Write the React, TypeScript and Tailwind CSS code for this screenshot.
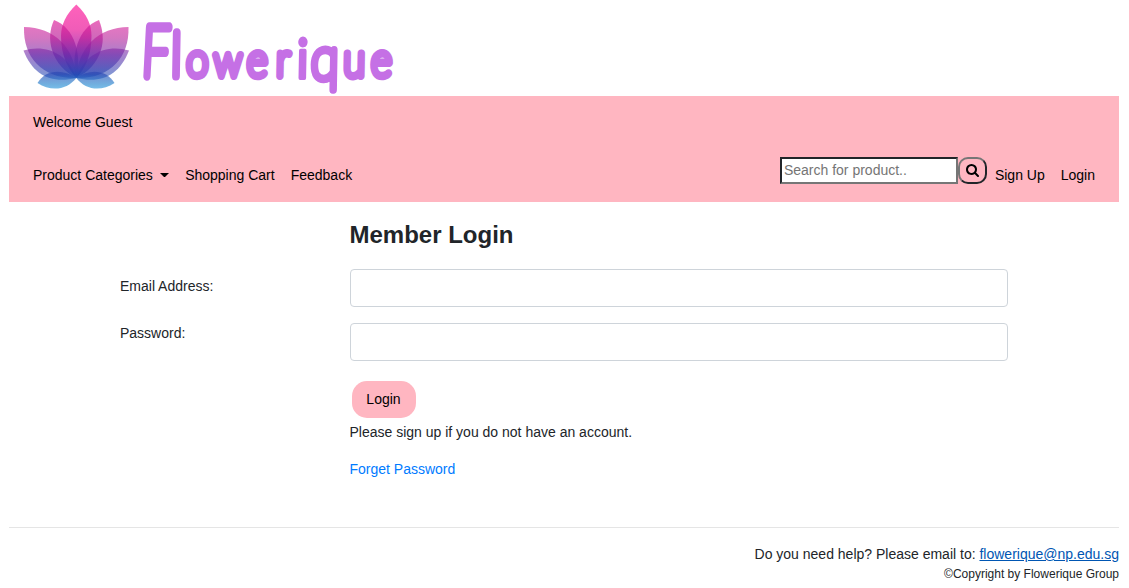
import React from "react";

function Lotus() {
  return (
    <svg className="ml-[13px] h-[96px] w-[110px] shrink-0" viewBox="22 0 110 96" aria-hidden="true">
      <defs>
        <linearGradient id="center" gradientUnits="userSpaceOnUse" x1="0" y1="4" x2="0" y2="78">
          <stop offset="0" stopColor="#ff62bb" />
          <stop offset="0.35" stopColor="#f05cb8" />
          <stop offset="0.7" stopColor="#a050c0" />
          <stop offset="1" stopColor="#3c6cc8" />
        </linearGradient>
        <linearGradient id="petal" gradientUnits="userSpaceOnUse" x1="0" y1="20" x2="0" y2="90">
          <stop offset="0" stopColor="#e01c98" />
          <stop offset="0.25" stopColor="#b81c98" />
          <stop offset="0.5" stopColor="#6a28a8" />
          <stop offset="0.78" stopColor="#2448b4" />
          <stop offset="0.92" stopColor="#1a80cc" />
          <stop offset="1" stopColor="#2a9ce0" />
        </linearGradient>
      </defs>
      <path fill="url(#center)" d="M76.300 4.500C66 14 61 25 61 36C61 54 67 68 76.300 78C86 68 91.500 54 91.500 36C91.500 25 87 14 76.300 4.500Z" />
      <g fill="url(#petal)">
        <path opacity="0.66" d="M54 20C49.500 30 49 40 52 50C56 63 65 72 76.300 78C82 55 75 28 54 20Z" />
        <path opacity="0.66" d="M99 20C103 30 104 40 101 50C97 63 88 72 76.300 78C70.500 55 78 28 99 20Z" />
        <path opacity="0.6" d="M24 27C23 58 43 79 76.300 78C75 48 54 27 24 27Z" />
        <path opacity="0.6" d="M128.500 27C129.500 58 109.500 79 76.300 78C77.500 48 98.500 27 128.500 27Z" />
        <path opacity="0.58" d="M23.500 50.500C33 75 51 84 76.300 78C68 53 45 44 23.500 50.500Z" />
        <path opacity="0.58" d="M129 50.500C119.500 75 101.500 84 76.300 78C84.500 53 107.500 44 129 50.500Z" />
        <path opacity="0.62" d="M37.500 83C45 70 62 68 76.300 78C67 90 51 92 37.500 83Z" />
        <path opacity="0.62" d="M114.500 83C107 70 90 68 76.300 78C85.500 90 101 92 114.500 83Z" />
      </g>
    </svg>
  );
}

function Wordmark() {
  return (
    <svg className="h-[96px] w-[270px] shrink-0" viewBox="132 0 270 96">
      <g
        fill="#c570e5"
        stroke="#c570e5"
        strokeLinejoin="round"
        strokeLinecap="round"
        className="font-['Lato',sans-serif] font-thin"
      >
        <text transform="translate(141 76) skewX(-3) scale(0.7 1)" strokeWidth="9.500" fontSize="70">F</text>
        <text transform="translate(171 76) skewX(-1) scale(0.8 1)" strokeWidth="9" fontSize="60">l</text>
        <text transform="translate(0 75.500) skewX(-1) scale(0.86 1)" strokeWidth="8" fontSize="46">
          <tspan x="216.500">o</tspan>
          <tspan x="248.500" fontSize="43">w</tspan>
          <tspan x="287 321">er</tspan>
          <tspan x="345" y="2" fontSize="54" strokeWidth="4" className="font-normal">i</tspan>
          <tspan x="361.500" y="3" fontSize="59">q</tspan>
          <tspan x="399 431.500" y="0">ue</tspan>
        </text>
      </g>
    </svg>
  );
}

function NavLink({ children }: { children: React.ReactNode }) {
  return <a href="#" className="flex items-center px-2 py-2 whitespace-nowrap">{children}</a>;
}

function Navbar() {
  return (
    <nav className="h-[106px] bg-[#ffb6c1] px-4 pt-[8px] text-black">
      <div className="px-2 py-2">Welcome Guest</div>
      <div className="mt-4 flex justify-between">
        <div className="flex">
          <NavLink>
            Product Categories
            <span className="mb-[2px] ml-[7.3px] h-0 w-[9px] border-x-[4.5px] border-t-[4px] border-x-transparent border-t-black" />
          </NavLink>
          <NavLink>Shopping Cart</NavLink>
          <NavLink>Feedback</NavLink>
        </div>
        <div className="flex">
          <form className="flex h-[27px]">
            <input
              placeholder="Search for product.."
              className="h-[27px] w-[178px] border-2 border-t-[#212529] border-r-[#767676] border-b-[#767676] border-l-[#212529] bg-white px-[2px] pb-[2px] placeholder:text-[#757575]"
            />
            <button
              type="button"
              aria-label="Search"
              className="flex h-[27px] w-[29px] items-center justify-center rounded-[10px] border-2 border-t-[#767676] border-r-[#212529] border-b-[#212529] border-l-[#767676] pb-[1px]"
            >
              <svg className="h-[13px] w-[13px]" viewBox="0 0 1664 1664" fill="currentColor">
                <path d="M1152 704q0-185-131.500-316.500T704 256 387.500 387.500 256 704t131.500 316.500T704 1152t316.500-131.500T1152 704zm512 832q0 52-38 90t-90 38q-54 0-90-38l-343-342q-179 124-399 124-143 0-273.500-55.500t-225-150-150-225T0 704t55.500-273.500 150-225 225-150T704 0t273.500 55.500 225 150 150 225T1408 704q0 220-124 399l343 343q37 37 37 90z" />
              </svg>
            </button>
          </form>
          <NavLink>Sign Up</NavLink>
          <NavLink>Login</NavLink>
        </div>
      </div>
    </nav>
  );
}

const field = "block h-[38px] w-[658px] rounded-[4px] border border-[#ced4da] bg-white px-3 outline-none";

function LoginForm() {
  return (
    <form className="h-[325px] pt-[18px] pl-[111px]">
      <h1 className="ml-[229.5px] h-[49px] text-[24px] leading-[30px] font-bold">Member Login</h1>
      <div className="flex h-[54px]">
        <label htmlFor="email" className="w-[230px] pt-[7px]">Email Address:</label>
        <input id="email" type="email" className={field} />
      </div>
      <div className="flex h-[58px]">
        <label htmlFor="password" className="w-[230px]">Password:</label>
        <input id="password" type="password" className={field} />
      </div>
      <div className="ml-[229.5px] flex flex-col items-start">
        <button type="button" className="ml-[2px] h-[37px] w-[64px] rounded-[15px] bg-[#ffb6c1] text-black">
          Login
        </button>
        <p className="mt-[4px]">Please sign up if you do not have an account.</p>
        <a href="#" className="mt-4 text-[#007bff]">Forget Password</a>
      </div>
    </form>
  );
}

export default function App() {
  return (
    <div className="h-[588px] overflow-hidden bg-white pr-[10px] pl-[9px] font-['Liberation_Sans',Arial,sans-serif] text-[14px] leading-[21px] text-[#212529]">
      <header className="flex h-[96px]">
        <Lotus />
        <Wordmark />
      </header>
      <Navbar />
      <LoginForm />
      <footer className="border-t border-[#e5e5e5] pt-4 text-right">
        <p>
          Do you need help? Please email to:{" "}
          <a href="mailto:flowerique@np.edu.sg" className="text-[#0056b3] underline">flowerique@np.edu.sg</a>
        </p>
        <p className="text-[12px] leading-[18px]">©Copyright by Flowerique Group</p>
      </footer>
    </div>
  );
}
